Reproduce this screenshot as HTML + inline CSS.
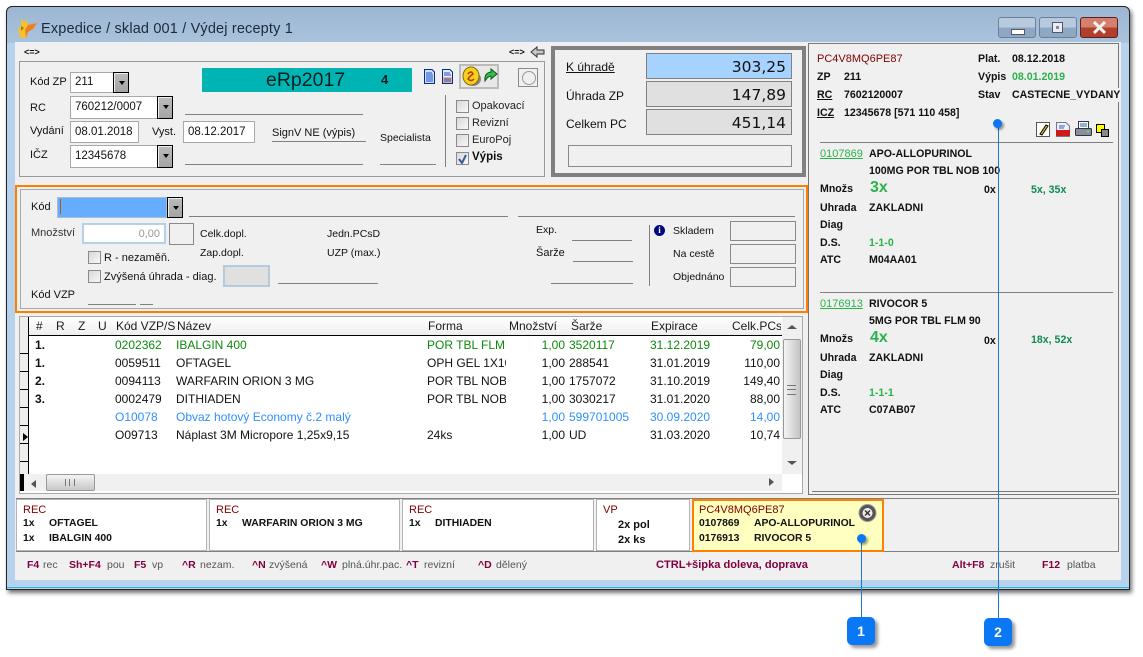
<!DOCTYPE html>
<html><head><meta charset="utf-8"><style>
html,body{margin:0;padding:0;background:#fff}
#p{position:relative;width:1143px;height:657px;overflow:hidden;background:#fff;font:11px/14px "Liberation Sans",sans-serif;color:#111}
#p div,#p span.t,#p svg{position:absolute}
.t{position:absolute;white-space:nowrap}
.b{font-weight:bold;font-size:10.6px}
.n{font-weight:bold;font-size:10.4px}
.m{color:#800000}
.g{color:#2ab24a}
.dg{color:#0c8a0c}
.bl{color:#2f8fff}
.u{text-decoration:underline}
.hl{background:#808080;height:1px}
.in{background:#fff;border:1px solid #a8a8a8;box-sizing:border-box}
.box{border:1px solid #8a8a8a;box-sizing:border-box}
.cb{width:13px;height:13px;box-sizing:border-box;background:linear-gradient(135deg,#d8d8d8,#f8f8f8);border:1px solid #8a8a8a}
.btn{background:linear-gradient(#bbb,#a4a4a4);border:1px solid #000;box-sizing:border-box;box-shadow:inset 1px 1px 0 #eee}
.btn:after{content:"";position:absolute;left:5px;top:8px;border:3px solid transparent;border-top:4px solid #000;border-bottom:0}
.c12{font-size:12px}
.r{text-align:right}
.hd{font-size:12px;color:#1a1a1a}
.s{color:#555;font-size:10.5px}
.k{color:#800040;font-weight:bold;font-size:10.5px}
.badge{width:28px;height:28px;background:#0a78f5;border-radius:5px;box-shadow:3px 3px 3px rgba(0,0,0,.4);color:#fff;font:bold 14px/28px "Liberation Sans",sans-serif;text-align:center}
.dot{width:9px;height:9px;border-radius:50%;background:#0a78f5;box-shadow:2px 2px 2px rgba(0,0,0,.4)}
.wb{background:#fff;border:1px solid #b4b4b4;box-sizing:border-box}
.v{font:15.5px/20px "DejaVu Sans",sans-serif;color:#111}
</style></head><body><div id="p">

<!-- window -->
<div style="left:6px;top:6px;width:1122px;height:582px;border:1px solid #222;border-radius:6px 6px 0 0;background:linear-gradient(#9db6d3 0,#a9c3dd 36px,#b7d2ec 36px,#b7d2ec 100%);box-shadow:2px 3px 4px rgba(0,0,0,.55)"></div>
<div style="left:7px;top:587px;width:1122px;height:1px;background:#2fb6dc"></div>
<div style="left:15px;top:42px;width:1106px;height:538px;background:#f0f0f0"></div>

<!-- logo -->
<svg style="left:18px;top:18px" width="20" height="21" viewBox="0 0 20 21"><path d="M3 0 L6 4 L9 2 L10 7 L19 5 L15 11 L10 14 L8 20 L3 20 L1 16 L0 11 L3 8 Z" fill="#f5c22e"/><path d="M10 7 L19 5 L15 11 L10 14 L8 20 L7 12 Z" fill="#ef7d22"/><path d="M3 8 L6 10 L3 13 Z" fill="#a87410"/></svg>
<span class="t" style="left:41px;top:19px;font-size:14.5px;line-height:20px;color:#1c2a3a;letter-spacing:.16px">Expedice / sklad 001 / Výdej recepty 1</span>

<!-- window buttons -->
<div style="left:998px;top:17px;width:38px;height:21px;border:1px solid #6c7f96;box-sizing:border-box;border-radius:3px;background:linear-gradient(#b7cade 50%,#8ea8c4 50%)"><div style="left:12px;top:11px;width:12px;height:4px;background:#fff;border:1px solid #556"></div></div>
<div style="left:1039px;top:17px;width:38px;height:21px;border:1px solid #6c7f96;box-sizing:border-box;border-radius:3px;background:linear-gradient(#b7cade 50%,#8ea8c4 50%)"><div style="left:12px;top:4px;width:11px;height:11px;background:#e8eef4;border:1px solid #556;box-sizing:border-box"><div style="left:3px;top:3px;width:3px;height:3px;background:#889"></div></div></div>
<div style="left:1080px;top:17px;width:38px;height:21px;border:1px solid #5a2020;box-sizing:border-box;border-radius:3px;background:linear-gradient(#d5806f 50%,#b0402c 50%)"><svg style="left:12px;top:3px" width="13" height="13" viewBox="0 0 13 13"><path d="M1 1 L12 12 M12 1 L1 12" stroke="#f3f3f3" stroke-width="3"/></svg></div>

<!-- group 1 -->
<span class="t" style="left:24px;top:45px;font-size:9px;font-weight:bold">&lt;=&gt;</span>
<span class="t" style="left:509px;top:45px;font-size:9px;font-weight:bold">&lt;=&gt;</span>
<svg style="left:530px;top:46px" width="15" height="12" viewBox="0 0 15 12"><path d="M1 6 L7 1 V4 H14 V8 H7 V11 Z" fill="#c8c8c8" stroke="#333"/></svg>
<div class="box" style="left:19px;top:61px;width:526px;height:116px;border-color:#999"></div>
<span class="t" style="left:30px;top:75px">Kód ZP</span>
<div class="in" style="left:70px;top:72px;width:59px;height:21px"></div>
<span class="t" style="left:75px;top:75px;font-size:11.5px">211</span>
<div class="btn" style="left:113px;top:72px;width:16px;height:21px"></div>
<div style="left:202px;top:68px;width:210px;height:24px;background:#00b4b4"></div>
<span class="t" style="left:266px;top:70px;font-size:19.5px;line-height:20px;color:#062020">eRp2017</span>
<span class="t" style="left:381px;top:73px;font-size:13px;color:#062020;font-weight:bold">4</span>
<span class="t" style="left:30px;top:101px">RC</span>
<div class="in" style="left:70px;top:96px;width:103px;height:23px"></div>
<span class="t" style="left:75px;top:100px;font-size:11.5px">760212/0007</span>
<div class="btn" style="left:157px;top:96px;width:16px;height:23px"></div>
<div class="hl" style="left:185px;top:114px;width:178px"></div>
<span class="t" style="left:30px;top:124px">Vydání</span>
<div class="in" style="left:70px;top:121px;width:69px;height:22px"></div>
<span class="t" style="left:75px;top:125px;font-size:11.5px">08.01.2018</span>
<span class="t" style="left:152px;top:125px">Vyst.</span>
<div class="in" style="left:183px;top:121px;width:72px;height:22px"></div>
<span class="t" style="left:188px;top:125px;font-size:11.5px">08.12.2017</span>
<span class="t" style="left:272px;top:126px;font-size:11px">SignV NE (výpis)</span>
<div class="hl" style="left:272px;top:141px;width:94px"></div>
<span class="t" style="left:380px;top:131px;font-size:10.5px">Specialista</span>
<div class="hl" style="left:380px;top:164px;width:56px"></div>
<span class="t" style="left:30px;top:148px">IČZ</span>
<div class="in" style="left:70px;top:145px;width:103px;height:23px"></div>
<span class="t" style="left:75px;top:149px;font-size:11.5px">12345678</span>
<div class="btn" style="left:157px;top:145px;width:16px;height:23px"></div>
<div class="hl" style="left:185px;top:164px;width:178px"></div>

<!-- doc icons -->
<svg style="left:424px;top:69px" width="11" height="15" viewBox="0 0 11 15"><path d="M.5.5H8L10.5 3V14.5H.5Z" fill="#cfe0ff" stroke="#0a2a8a"/><path d="M2 4H8M2 6H9M2 8H9M2 10H9M2 12H9" stroke="#1450c8"/></svg>
<svg style="left:442px;top:69px" width="11" height="15" viewBox="0 0 11 15"><path d="M.5.5H8L10.5 3V14.5H.5Z" fill="#e4ecff" stroke="#0a2a8a"/><path d="M2 4H8M2 6H9" stroke="#1450c8"/><rect x="1" y="8" width="9" height="6" fill="#f5b090"/><path d="M2 10H9M2 12H9" stroke="#1450c8"/></svg>
<div style="left:459px;top:64px;width:40px;height:25px;background:#e8e8e8;border:2px solid #bbb;box-sizing:border-box"></div>
<svg style="left:461px;top:65px" width="37" height="23" viewBox="0 0 37 23"><ellipse cx="12" cy="14" rx="8" ry="7" fill="#888"/><ellipse cx="10" cy="11" rx="8" ry="9" fill="#f2d21a" stroke="#8a6a00"/><path d="M7 9 Q10 5 12 9 Q8 12 7 14 Q10 17 13 14" fill="none" stroke="#c03010" stroke-width="1.5"/><path d="M24 16 Q23 8 30 7 V4 L36 9 L30 14 V11 Q27 11 24 16Z" fill="#2fbf4a" stroke="#0a5a1a"/></svg>
<div class="box" style="left:518px;top:68px;width:20px;height:19px"><div style="left:3px;top:2px;width:12px;height:12px;border:1px solid #999;border-radius:50%"></div></div>
<div style="left:445px;top:95px;width:1px;height:72px;background:#808080"></div>
<div class="cb" style="left:456px;top:100px"></div><span class="t" style="left:472px;top:99px;color:#222">Opakovací</span>
<div class="cb" style="left:456px;top:117px"></div><span class="t" style="left:472px;top:116px;color:#222">Revizní</span>
<div class="cb" style="left:456px;top:134px"></div><span class="t" style="left:472px;top:133px;color:#222">EuroPoj</span>
<div class="cb" style="left:456px;top:152px"></div><svg style="left:458px;top:154px" width="10" height="10" viewBox="0 0 10 10"><path d="M1 5 L4 9 L8 1" fill="none" stroke="#3a5a9a" stroke-width="2"/></svg><span class="t b" style="left:472px;top:150px;font-size:11.5px">Výpis</span>

<!-- pay panel -->
<div style="left:551px;top:46px;width:255px;height:131px;border:4px solid #808080;box-sizing:border-box"></div>
<span class="t u c12" style="left:566px;top:60px">K úhradě</span>
<div style="left:646px;top:53px;width:146px;height:26px;background:#a6d2ff;border:1px solid #808080;box-sizing:border-box"></div>
<span class="t r v" style="left:700px;width:86px;top:57px">303,25</span>
<span class="t c12" style="left:566px;top:89px">Úhrada ZP</span>
<div style="left:646px;top:81px;width:146px;height:26px;background:#e0e0e0;border:1px solid #808080;box-sizing:border-box"></div>
<span class="t r v" style="left:700px;width:86px;top:85px">147,89</span>
<span class="t c12" style="left:566px;top:117px">Celkem PC</span>
<div style="left:646px;top:109px;width:146px;height:26px;background:#e0e0e0;border:1px solid #808080;box-sizing:border-box"></div>
<span class="t r v" style="left:700px;width:86px;top:113px">451,14</span>
<div class="box" style="left:568px;top:145px;width:224px;height:22px"></div>

<!-- right panel -->
<div style="left:808px;top:43px;width:311px;height:452px;border:1px solid #777;box-sizing:border-box"></div>
<div style="left:812px;top:491px;width:304px;height:1px;background:#777"></div>
<span class="t m" style="left:817px;top:52px">PC4V8MQ6PE87</span>
<span class="t b" style="left:978px;top:52px">Plat.</span><span class="t b" style="left:1012px;top:52px">08.12.2018</span>
<span class="t b" style="left:817px;top:70px">ZP</span><span class="t b" style="left:844px;top:70px">211</span>
<span class="t b" style="left:978px;top:70px">Výpis</span><span class="t b g" style="left:1012px;top:70px">08.01.2019</span>
<span class="t b u" style="left:817px;top:88px">RC</span><span class="t b" style="left:844px;top:88px">7602120007</span>
<span class="t b" style="left:978px;top:88px">Stav</span><span class="t b" style="left:1012px;top:88px;background:#f0f0f0">CASTECNE_VYDANY</span>
<span class="t b u" style="left:817px;top:106px">ICZ</span><span class="t b" style="left:844px;top:106px">12345678 [571 110 458]</span>

<svg style="left:1036px;top:122px" width="14" height="15" viewBox="0 0 14 15"><rect x=".5" y=".5" width="13" height="14" fill="#fff" stroke="#555"/><path d="M4 12 L10 3 L12 4 L6 13Z" fill="#f0c020" stroke="#000"/></svg>
<svg style="left:1056px;top:122px" width="14" height="15" viewBox="0 0 14 15"><path d="M.5.5H10L13.5 4V14.5H.5Z" fill="#eef" stroke="#778"/><path d="M3 4H9M3 6H8" stroke="#26a"/><rect x="0" y="8" width="14" height="6" fill="#d01818"/></svg>
<svg style="left:1075px;top:121px" width="17" height="16" viewBox="0 0 17 16"><rect x="3.5" y=".5" width="10" height="7" fill="#fff" stroke="#335"/><path d="M5 3H12M5 5H12" stroke="#26a"/><rect x=".5" y="7.5" width="16" height="7" rx="1" fill="#8a9098" stroke="#334"/><rect x="12" y="10" width="2" height="1" fill="#6f6"/></svg>
<svg style="left:1096px;top:124px" width="13" height="13" viewBox="0 0 13 13"><rect x=".5" y=".5" width="8" height="8" fill="#ff0" stroke="#000"/><rect x="5.5" y="5.5" width="7" height="7" fill="#888" stroke="#000"/></svg>

<div class="hl" style="left:820px;top:142px;width:293px"></div>
<span class="t g u" style="left:820px;top:147px;font-size:11px">0107869</span><span class="t b" style="left:869px;top:147px">APO-ALLOPURINOL</span>
<span class="t b" style="left:869px;top:164px">100MG POR TBL NOB 100</span>
<span class="t b" style="left:820px;top:182px">Množs</span><span class="t b g" style="left:870px;top:181px;font-size:16px">3x</span>
<span class="t b" style="left:984px;top:183px">0x</span><span class="t b" style="left:1031px;top:183px;color:#118a55">5x, 35x</span>
<span class="t b" style="left:820px;top:201px">Uhrada</span><span class="t b" style="left:869px;top:201px">ZAKLADNI</span>
<span class="t b" style="left:820px;top:218px">Diag</span>
<span class="t b" style="left:820px;top:236px">D.S.</span><span class="t b g" style="left:869px;top:236px">1-1-0</span>
<span class="t b" style="left:820px;top:253px">ATC</span><span class="t b" style="left:869px;top:253px">M04AA01</span>

<div class="hl" style="left:820px;top:292px;width:293px"></div>
<span class="t g u" style="left:820px;top:297px;font-size:11px">0176913</span><span class="t b" style="left:869px;top:297px">RIVOCOR 5</span>
<span class="t b" style="left:869px;top:314px">5MG POR TBL FLM 90</span>
<span class="t b" style="left:820px;top:332px">Množs</span><span class="t b g" style="left:870px;top:331px;font-size:16px">4x</span>
<span class="t b" style="left:984px;top:334px">0x</span><span class="t b" style="left:1031px;top:333px;color:#118a55">18x, 52x</span>
<span class="t b" style="left:820px;top:351px">Uhrada</span><span class="t b" style="left:869px;top:351px">ZAKLADNI</span>
<span class="t b" style="left:820px;top:368px">Diag</span>
<span class="t b" style="left:820px;top:386px">D.S.</span><span class="t b g" style="left:869px;top:386px">1-1-1</span>
<span class="t b" style="left:820px;top:403px">ATC</span><span class="t b" style="left:869px;top:403px">C07AB07</span>

<!-- orange panel -->
<div style="left:15px;top:185px;width:793px;height:128px;border:2px solid #ff8000;box-sizing:border-box"></div>
<div style="left:20px;top:189px;width:784px;height:120px;border:1px solid #a8a8a8;box-sizing:border-box"></div>
<span class="t" style="left:31px;top:200px">Kód</span>
<div style="left:57px;top:197px;width:110px;height:21px;background:#64adff;border:1px solid #a9bdd0;box-sizing:border-box"></div>
<div style="left:60px;top:199px;width:1px;height:15px;background:#a06020"></div>
<div class="btn" style="left:167px;top:197px;width:16px;height:21px"></div>
<div class="hl" style="left:189px;top:216px;width:319px"></div>
<div class="hl" style="left:518px;top:216px;width:277px"></div>
<span class="t" style="left:31px;top:226px;color:#333">Množství</span>
<div style="left:82px;top:223px;width:84px;height:21px;background:#fff;border:2px solid #b6d0ea;box-sizing:border-box"></div>
<span class="t r" style="left:100px;width:60px;top:227px;color:#999">0,00</span>
<div class="box" style="left:169px;top:223px;width:25px;height:22px"></div>
<span class="t" style="left:200px;top:227px;font-size:10.5px">Celk.dopl.</span>
<span class="t" style="left:200px;top:246px;font-size:10.5px">Zap.dopl.</span>
<span class="t" style="left:327px;top:227px;font-size:10.5px">Jedn.PCsD</span>
<span class="t" style="left:327px;top:246px;font-size:10.5px">UZP (max.)</span>
<div class="cb" style="left:88px;top:251px"></div><span class="t" style="left:104px;top:251px">R - nezaměň.</span>
<div class="cb" style="left:88px;top:270px"></div><span class="t" style="left:104px;top:270px">Zvýšená úhrada - diag.</span>
<div style="left:223px;top:265px;width:47px;height:22px;background:#e0e0e0;border:2px solid #b6cade;box-sizing:border-box"></div>
<div class="hl" style="left:278px;top:283px;width:100px"></div>
<span class="t" style="left:31px;top:288px">Kód VZP</span>
<div class="hl" style="left:88px;top:304px;width:48px"></div>
<div class="hl" style="left:140px;top:304px;width:13px"></div>
<span class="t" style="left:536px;top:223px;font-size:10.5px">Exp.</span>
<div class="hl" style="left:572px;top:240px;width:60px"></div>
<span class="t" style="left:536px;top:246px">Šarže</span>
<div class="hl" style="left:573px;top:261px;width:60px"></div>
<div class="hl" style="left:551px;top:283px;width:82px"></div>
<div style="left:649px;top:225px;width:1px;height:61px;background:#808080"></div>
<div style="left:654px;top:225px;width:11px;height:11px;border-radius:50%;background:#000a80;color:#fff;font:bold 9px/11px 'Liberation Serif',serif;text-align:center">i</div>
<span class="t" style="left:673px;top:224px;font-size:10.5px">Skladem</span>
<div class="box" style="left:730px;top:221px;width:66px;height:20px"></div>
<span class="t" style="left:673px;top:247px;font-size:10.5px">Na cestě</span>
<div class="box" style="left:730px;top:244px;width:66px;height:20px"></div>
<span class="t" style="left:673px;top:270px;font-size:10.5px">Objednáno</span>
<div class="box" style="left:730px;top:267px;width:66px;height:20px"></div>

<!-- table -->
<div style="left:19px;top:316px;width:784px;height:178px;background:#fff;border:1px solid #a8a8a8;box-sizing:border-box"></div>
<div style="left:20px;top:317px;width:762px;height:18px;background:linear-gradient(#fff,#eee)"></div>
<div style="left:20px;top:335px;width:762px;height:1px;background:#000"></div>
<div style="left:20px;top:317px;width:8px;height:157px;background:#eee"></div>
<div style="left:28px;top:317px;width:1px;height:157px;background:#000"></div>
<div style="left:20px;top:353px;width:8px;height:1px;background:#000"></div>
<div style="left:20px;top:371px;width:8px;height:1px;background:#000"></div>
<div style="left:20px;top:389px;width:8px;height:1px;background:#000"></div>
<div style="left:20px;top:407px;width:8px;height:1px;background:#000"></div>
<div style="left:20px;top:425px;width:8px;height:1px;background:#000"></div>
<div style="left:20px;top:443px;width:8px;height:1px;background:#000"></div>
<div style="left:20px;top:461px;width:8px;height:1px;background:#000"></div>
<div style="left:23px;top:433px;border:4px solid transparent;border-left:5px solid #000;border-right:0"></div>
<span class="t hd" style="left:36px;top:319px">#</span>
<span class="t hd" style="left:56px;top:319px">R</span>
<span class="t hd" style="left:78px;top:319px">Z</span>
<span class="t hd" style="left:98px;top:319px">U</span>
<span class="t hd" style="left:116px;top:319px">Kód VZP/S</span>
<span class="t hd" style="left:177px;top:319px">Název</span>
<span class="t hd" style="left:428px;top:319px">Forma</span>
<span class="t hd" style="left:509px;top:319px">Množství</span>
<span class="t hd" style="left:571px;top:319px">Šarže</span>
<span class="t hd" style="left:651px;top:319px">Expirace</span>
<span class="t hd" style="left:732px;top:319px;width:49px;overflow:hidden">Celk.PCs</span>

<!-- rows -->
<span class="t b c12" style="left:35px;top:338px">1.</span>
<span class="t c12 dg" style="left:115px;top:338px">0202362</span><span class="t c12 dg" style="left:176px;top:338px">IBALGIN 400</span><span class="t c12 dg" style="left:427px;top:338px;width:78px;overflow:hidden">POR TBL FLM</span><span class="t c12 dg r" style="left:505px;width:60px;top:338px">1,00</span><span class="t c12 dg" style="left:569px;top:338px">3520117</span><span class="t c12 dg" style="left:650px;top:338px">31.12.2019</span><span class="t c12 dg r" style="left:720px;width:60px;top:338px">79,00</span>
<span class="t b c12" style="left:35px;top:356px">1.</span>
<span class="t c12" style="left:115px;top:356px">0059511</span><span class="t c12" style="left:176px;top:356px">OFTAGEL</span><span class="t c12" style="left:427px;top:356px;width:79px;overflow:hidden">OPH GEL 1X10</span><span class="t c12 r" style="left:505px;width:60px;top:356px">1,00</span><span class="t c12" style="left:569px;top:356px">288541</span><span class="t c12" style="left:650px;top:356px">31.01.2019</span><span class="t c12 r" style="left:720px;width:60px;top:356px">110,00</span>
<span class="t b c12" style="left:35px;top:374px">2.</span>
<span class="t c12" style="left:115px;top:374px">0094113</span><span class="t c12" style="left:176px;top:374px">WARFARIN ORION 3 MG</span><span class="t c12" style="left:427px;top:374px;width:79px;overflow:hidden">POR TBL NOB</span><span class="t c12 r" style="left:505px;width:60px;top:374px">1,00</span><span class="t c12" style="left:569px;top:374px">1757072</span><span class="t c12" style="left:650px;top:374px">31.10.2019</span><span class="t c12 r" style="left:720px;width:60px;top:374px">149,40</span>
<span class="t b c12" style="left:35px;top:392px">3.</span>
<span class="t c12" style="left:115px;top:392px">0002479</span><span class="t c12" style="left:176px;top:392px">DITHIADEN</span><span class="t c12" style="left:427px;top:392px;width:79px;overflow:hidden">POR TBL NOB</span><span class="t c12 r" style="left:505px;width:60px;top:392px">1,00</span><span class="t c12" style="left:569px;top:392px">3030217</span><span class="t c12" style="left:650px;top:392px">31.01.2020</span><span class="t c12 r" style="left:720px;width:60px;top:392px">88,00</span>
<span class="t c12 bl" style="left:115px;top:410px">O10078</span><span class="t c12 bl" style="left:176px;top:410px">Obvaz hotový Economy č.2 malý</span><span class="t c12 bl r" style="left:505px;width:60px;top:410px">1,00</span><span class="t c12 bl" style="left:569px;top:410px">599701005</span><span class="t c12 bl" style="left:650px;top:410px">30.09.2020</span><span class="t c12 bl r" style="left:720px;width:60px;top:410px">14,00</span>
<span class="t c12" style="left:115px;top:428px">O09713</span><span class="t c12" style="left:176px;top:428px">Náplast 3M Micropore 1,25x9,15</span><span class="t c12" style="left:427px;top:428px">24ks</span><span class="t c12 r" style="left:505px;width:60px;top:428px">1,00</span><span class="t c12" style="left:569px;top:428px">UD</span><span class="t c12" style="left:650px;top:428px">31.03.2020</span><span class="t c12 r" style="left:720px;width:60px;top:428px">10,74</span>

<!-- scrollbars -->
<div style="left:782px;top:317px;width:20px;height:157px;background:#f0f0f0"></div>
<div style="left:787px;top:325px;border:5px solid transparent;border-bottom:4px solid #555;border-top:0"></div>
<div style="left:783px;top:339px;width:18px;height:100px;background:linear-gradient(90deg,#f4f4f4,#c4c4c4);border:1px solid #999;box-sizing:border-box;border-radius:2px"></div>
<div style="left:787px;top:385px;width:9px;height:8px;border-top:1px solid #777;border-bottom:1px solid #777"><div style="left:0;top:3px;width:9px;height:1px;background:#777"></div></div>
<div style="left:787px;top:461px;border:5px solid transparent;border-top:4px solid #555;border-bottom:0"></div>
<div style="left:20px;top:474px;width:762px;height:17px;background:#f0f0f0"></div>
<div style="left:20px;top:474px;width:4px;height:17px;background:#000"></div>
<div style="left:31px;top:480px;border:4px solid transparent;border-right:5px solid #555;border-left:0"></div>
<div style="left:46px;top:474px;width:49px;height:17px;background:linear-gradient(#f4f4f4,#c8c8c8);border:1px solid #999;box-sizing:border-box;border-radius:2px"></div>
<div style="left:65px;top:479px;width:8px;height:7px;border-left:1px solid #777;border-right:1px solid #777"><div style="left:3px;top:0;width:1px;height:7px;background:#777"></div></div>
<div style="left:769px;top:478px;border:4px solid transparent;border-left:5px solid #555;border-right:0"></div>

<!-- bottom strip -->
<div style="left:16px;top:498px;width:1103px;height:54px;border:1px solid #808080;box-sizing:border-box"></div>
<div class="wb" style="left:16px;top:499px;width:191px;height:52px"></div>
<div class="wb" style="left:209px;top:499px;width:191px;height:52px"></div>
<div class="wb" style="left:402px;top:499px;width:192px;height:52px"></div>
<div class="wb" style="left:596px;top:499px;width:94px;height:52px"></div>
<div style="left:692px;top:499px;width:192px;height:53px;background:#ffffc0;border:2px solid #ff8000;box-sizing:border-box"></div>

<span class="t m" style="left:23px;top:503px">REC</span>
<span class="t n" style="left:23px;top:517px">1x</span><span class="t n" style="left:49px;top:517px">OFTAGEL</span>
<span class="t n" style="left:23px;top:532px">1x</span><span class="t n" style="left:49px;top:532px">IBALGIN 400</span>
<span class="t m" style="left:216px;top:503px">REC</span>
<span class="t n" style="left:216px;top:517px">1x</span><span class="t n" style="left:242px;top:517px">WARFARIN ORION 3 MG</span>
<span class="t m" style="left:409px;top:503px">REC</span>
<span class="t n" style="left:409px;top:517px">1x</span><span class="t n" style="left:435px;top:517px">DITHIADEN</span>
<span class="t m" style="left:603px;top:503px">VP</span>
<span class="t n" style="left:618px;top:518px;font-size:11px">2x pol</span>
<span class="t n" style="left:618px;top:533px;font-size:11px">2x ks</span>
<span class="t m" style="left:699px;top:503px">PC4V8MQ6PE87</span>
<span class="t n" style="left:699px;top:517px">0107869</span><span class="t n" style="left:754px;top:517px">APO-ALLOPURINOL</span>
<span class="t n" style="left:699px;top:532px">0176913</span><span class="t n" style="left:754px;top:532px">RIVOCOR 5</span>
<svg style="left:858px;top:503px" width="19" height="20" viewBox="0 0 19 20"><circle cx="9.5" cy="10" r="8.5" fill="#555" stroke="#999"/><circle cx="9.5" cy="10" r="5" fill="#eee"/><path d="M7 7.5 L12 12.5 M12 7.5 L7 12.5" stroke="#333" stroke-width="1.5"/></svg>

<!-- shortcut bar -->
<span class="t k" style="left:27px;top:558px">F4</span><span class="t s" style="left:43px;top:558px">rec</span>
<span class="t k" style="left:69px;top:558px">Sh+F4</span><span class="t s" style="left:107px;top:558px">pou</span>
<span class="t k" style="left:134px;top:558px">F5</span><span class="t s" style="left:152px;top:558px">vp</span>
<span class="t k" style="left:182px;top:558px">^R</span><span class="t s" style="left:200px;top:558px">nezam.</span>
<span class="t k" style="left:252px;top:558px">^N</span><span class="t s" style="left:269px;top:558px">zvýšená</span>
<span class="t k" style="left:321px;top:558px">^W</span><span class="t s" style="left:342px;top:558px">plná.úhr.pac.</span>
<span class="t k" style="left:406px;top:558px">^T</span><span class="t s" style="left:424px;top:558px">revizní</span>
<span class="t k" style="left:478px;top:558px">^D</span><span class="t s" style="left:496px;top:558px">dělený</span>
<span class="t k" style="left:656px;top:558px;font-size:11.1px">CTRL+šipka doleva, doprava</span>
<span class="t k" style="left:952px;top:558px">Alt+F8</span><span class="t s" style="left:990px;top:558px">zrušit</span>
<span class="t k" style="left:1042px;top:558px">F12</span><span class="t s" style="left:1067px;top:558px">platba</span>

<!-- callouts -->
<div style="left:861px;top:538px;width:1px;height:80px;background:#1f78d8"></div>
<div class="dot" style="left:857px;top:534px"></div>
<div class="badge" style="left:847px;top:617px">1</div>
<div style="left:998px;top:123px;width:1px;height:496px;background:#1f78d8"></div>
<div class="dot" style="left:993px;top:119px"></div>
<div class="badge" style="left:984px;top:618px">2</div>
</div></body></html>
